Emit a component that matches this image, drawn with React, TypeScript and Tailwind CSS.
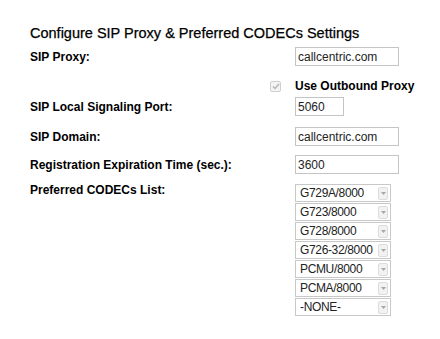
import React from 'react';

const codecs = ['G729A/8000', 'G723/8000', 'G728/8000', 'G726-32/8000', 'PCMU/8000', 'PCMA/8000', '-NONE-'];

function TextBox({ value, width }: { value: string; width: string }) {
  return (
    <div
      className={`${width} h-[19px] border border-[#c4c4c4] bg-white flex items-center pl-[2px] text-[12px] text-[#222] leading-none`}
    >
      {value}
    </div>
  );
}

function CodecSelect({ value }: { value: string }) {
  return (
    <div className="w-[96px] h-[18px] border border-[#c8c8c8] bg-white flex items-center justify-between pl-[4px] pr-[2px] text-[12px] tracking-[-0.35px] text-[#222] leading-none">
      <span>{value}</span>
      <span className="w-[10px] h-[13px] border border-[#dcdcdc] bg-[#f2f2f2] rounded-[2px] flex items-center justify-center">
        <svg width="5" height="3" viewBox="0 0 5 3">
          <path d="M0 0h5L2.5 3z" fill="#a8a8a8" />
        </svg>
      </span>
    </div>
  );
}

export default function App() {
  return (
    <div className="w-[440px] h-[339px] bg-white pt-[25px] pl-[30px] font-['Liberation_Sans',Arial,sans-serif] text-black">
      <h2 className="h-[16px] text-[14.5px] leading-[16px] font-normal [-webkit-text-stroke:0.25px_black]">
        Configure SIP Proxy &amp; Preferred CODECs Settings
      </h2>

      {/* SIP Proxy */}
      <div className="mt-[6px] h-[19px] flex items-center">
        <div className="w-[265px] text-[12px] font-bold">SIP Proxy:</div>
        <TextBox value="callcentric.com" width="w-[104px]" />
      </div>

      {/* Outbound proxy checkbox */}
      <div className="mt-[10px] h-[20px] flex items-center">
        <div className="w-[265px] flex justify-end pr-[14px]">
          <span className="w-[11px] h-[11px] border border-[#cfcfcf] bg-[#f4f4f4] rounded-[2px] flex items-center justify-center">
            <svg width="8" height="7" viewBox="0 0 8 7">
              <path d="M1 3.5l2 2L7 1" fill="none" stroke="#b4b4b4" strokeWidth="1.4" />
            </svg>
          </span>
        </div>
        <div className="text-[12px] font-bold">Use Outbound Proxy</div>
      </div>

      {/* Port */}
      <div className="mt-[1px] h-[19px] flex items-center">
        <div className="w-[265px] text-[12px] font-bold">SIP Local Signaling Port:</div>
        <TextBox value="5060" width="w-[49px]" />
      </div>

      {/* Domain */}
      <div className="mt-[11px] h-[19px] flex items-center">
        <div className="w-[265px] text-[12px] font-bold">SIP Domain:</div>
        <TextBox value="callcentric.com" width="w-[104px]" />
      </div>

      {/* Expiration */}
      <div className="mt-[9px] h-[19px] flex items-center">
        <div className="w-[265px] text-[12px] font-bold">Registration Expiration Time (sec.):</div>
        <TextBox value="3600" width="w-[104px]" />
      </div>

      {/* Codecs */}
      <div className="mt-[10px] flex items-start">
        <div className="w-[265px] text-[12px] font-bold leading-[14px] -mt-[1px]">Preferred CODECs List:</div>
        <div className="flex flex-col gap-[1px]">
          {codecs.map((c) => (
            <CodecSelect key={c} value={c} />
          ))}
        </div>
      </div>
    </div>
  );
}
